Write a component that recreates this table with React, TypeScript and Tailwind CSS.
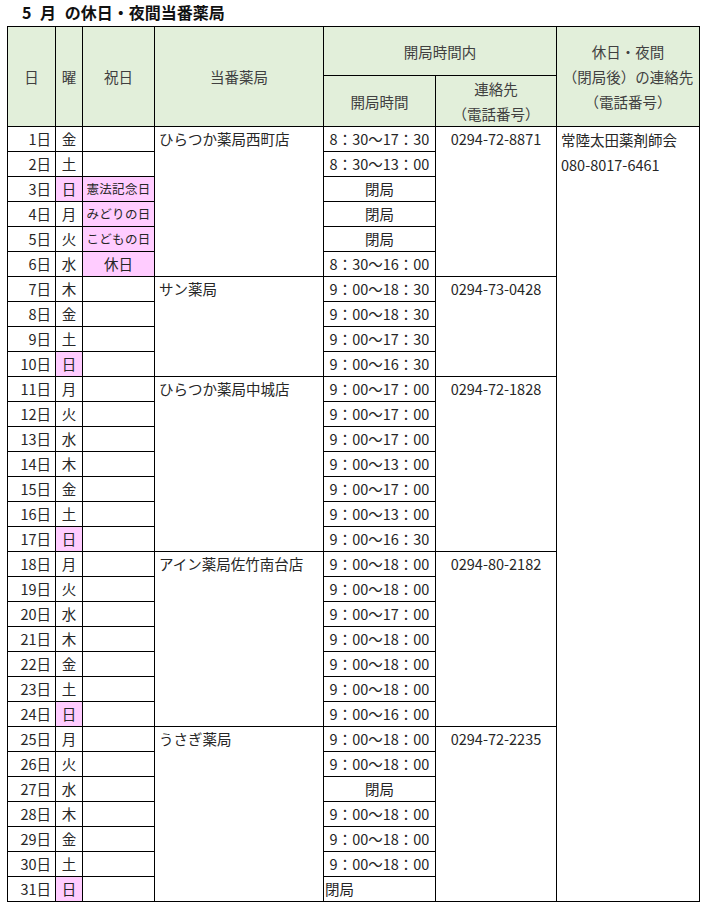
import React from 'react';

type Day = {
  d: number;
  w: string;
  holiday?: string;
  hours: string;
  hoursLeft?: boolean;
};

type Group = {
  name: string;
  tel: string;
  days: Day[];
};

const groups: Group[] = [
  {
    name: 'ひらつか薬局西町店',
    tel: '0294-72-8871',
    days: [
      { d: 1, w: '金', hours: '8：30～17：30' },
      { d: 2, w: '土', hours: '8：30～13：00' },
      { d: 3, w: '日', holiday: '憲法記念日', hours: '閉局' },
      { d: 4, w: '月', holiday: 'みどりの日', hours: '閉局' },
      { d: 5, w: '火', holiday: 'こどもの日', hours: '閉局' },
      { d: 6, w: '水', holiday: '休日', hours: '8：30～16：00' },
    ],
  },
  {
    name: 'サン薬局',
    tel: '0294-73-0428',
    days: [
      { d: 7, w: '木', hours: '9：00～18：30' },
      { d: 8, w: '金', hours: '9：00～18：30' },
      { d: 9, w: '土', hours: '9：00～17：30' },
      { d: 10, w: '日', hours: '9：00～16：30' },
    ],
  },
  {
    name: 'ひらつか薬局中城店',
    tel: '0294-72-1828',
    days: [
      { d: 11, w: '月', hours: '9：00～17：00' },
      { d: 12, w: '火', hours: '9：00～17：00' },
      { d: 13, w: '水', hours: '9：00～17：00' },
      { d: 14, w: '木', hours: '9：00～13：00' },
      { d: 15, w: '金', hours: '9：00～17：00' },
      { d: 16, w: '土', hours: '9：00～13：00' },
      { d: 17, w: '日', hours: '9：00～16：30' },
    ],
  },
  {
    name: 'アイン薬局佐竹南台店',
    tel: '0294-80-2182',
    days: [
      { d: 18, w: '月', hours: '9：00～18：00' },
      { d: 19, w: '火', hours: '9：00～18：00' },
      { d: 20, w: '水', hours: '9：00～17：00' },
      { d: 21, w: '木', hours: '9：00～18：00' },
      { d: 22, w: '金', hours: '9：00～18：00' },
      { d: 23, w: '土', hours: '9：00～18：00' },
      { d: 24, w: '日', hours: '9：00～16：00' },
    ],
  },
  {
    name: 'うさぎ薬局',
    tel: '0294-72-2235',
    days: [
      { d: 25, w: '月', hours: '9：00～18：00' },
      { d: 26, w: '火', hours: '9：00～18：00' },
      { d: 27, w: '水', hours: '閉局' },
      { d: 28, w: '木', hours: '9：00～18：00' },
      { d: 29, w: '金', hours: '9：00～18：00' },
      { d: 30, w: '土', hours: '9：00～18：00' },
      { d: 31, w: '日', hours: '閉局', hoursLeft: true },
    ],
  },
];

const cell = 'border border-black p-0 leading-none whitespace-nowrap';
const head = 'border border-black p-0 bg-[#e2efda] text-[#404040] font-normal text-center align-middle leading-[25px]';

export default function App() {
  const totalDays = groups.reduce((n, g) => n + g.days.length, 0);

  return (
    <div
      className="w-[705px] h-[902px] bg-white text-[14.5px] text-[#262626]"
      style={{ fontFamily: '"Noto Sans CJK JP", "Noto Sans", sans-serif' }}
    >
      <div className="h-[26px] pl-[22px] pt-[2px] text-[16px] font-bold text-[#111] leading-[20px] [word-spacing:5px]">
        5 月 の休日・夜間当番薬局
      </div>

      <table className="ml-[7px] w-[692px] table-fixed border-collapse">
        <colgroup>
          <col className="w-[48px]" />
          <col className="w-[27px]" />
          <col className="w-[72px]" />
          <col className="w-[169px]" />
          <col className="w-[112px]" />
          <col className="w-[121px]" />
          <col className="w-[143px]" />
        </colgroup>
        <thead>
          <tr className="h-[49px]">
            <th rowSpan={2} className={head}>日</th>
            <th rowSpan={2} className={head}>曜</th>
            <th rowSpan={2} className={head}>祝日</th>
            <th rowSpan={2} className={head}>当番薬局</th>
            <th colSpan={2} className={head}>開局時間内</th>
            <th rowSpan={2} className={head}>
              <div>休日・夜間</div>
              <div>（閉局後）の連絡先</div>
              <div>（電話番号）</div>
            </th>
          </tr>
          <tr className="h-[49px]">
            <th className={head}>開局時間</th>
            <th className={head}>
              <div>連絡先</div>
              <div>（電話番号）</div>
            </th>
          </tr>
        </thead>
        <tbody>
          {groups.map((g, gi) =>
            g.days.map((day, di) => (
              <tr key={day.d} className="h-[25px]">
                <td className={`${cell} text-right pr-[4px]`}>{day.d}日</td>
                <td className={`${cell} text-center ${day.w === '日' ? 'bg-[#ffccff]' : ''}`}>{day.w}</td>
                <td
                  className={`${cell} text-center ${day.holiday ? 'bg-[#ffccff]' : ''} ${
                    day.holiday && day.holiday.length > 2 ? 'text-[12.5px] tracking-[0.3px]' : ''
                  }`}
                >
                  {day.holiday ?? ''}
                </td>
                {di === 0 && (
                  <td rowSpan={g.days.length} className={`${cell} align-top pl-[4px] pt-[5px]`}>
                    {g.name}
                  </td>
                )}
                <td className={`${cell} ${day.hoursLeft ? 'text-left pl-[1px]' : 'text-center'}`}>
                  {day.hours}
                </td>
                {di === 0 && (
                  <td rowSpan={g.days.length} className={`${cell} align-top text-center pt-[5px]`}>
                    {g.tel}
                  </td>
                )}
                {gi === 0 && di === 0 && (
                  <td rowSpan={totalDays} className={`${cell} align-top pl-[4px]`}>
                    <div className="leading-[25px]">常陸太田薬剤師会</div>
                    <div className="leading-[25px]">080-8017-6461</div>
                  </td>
                )}
              </tr>
            ))
          )}
        </tbody>
      </table>
    </div>
  );
}
